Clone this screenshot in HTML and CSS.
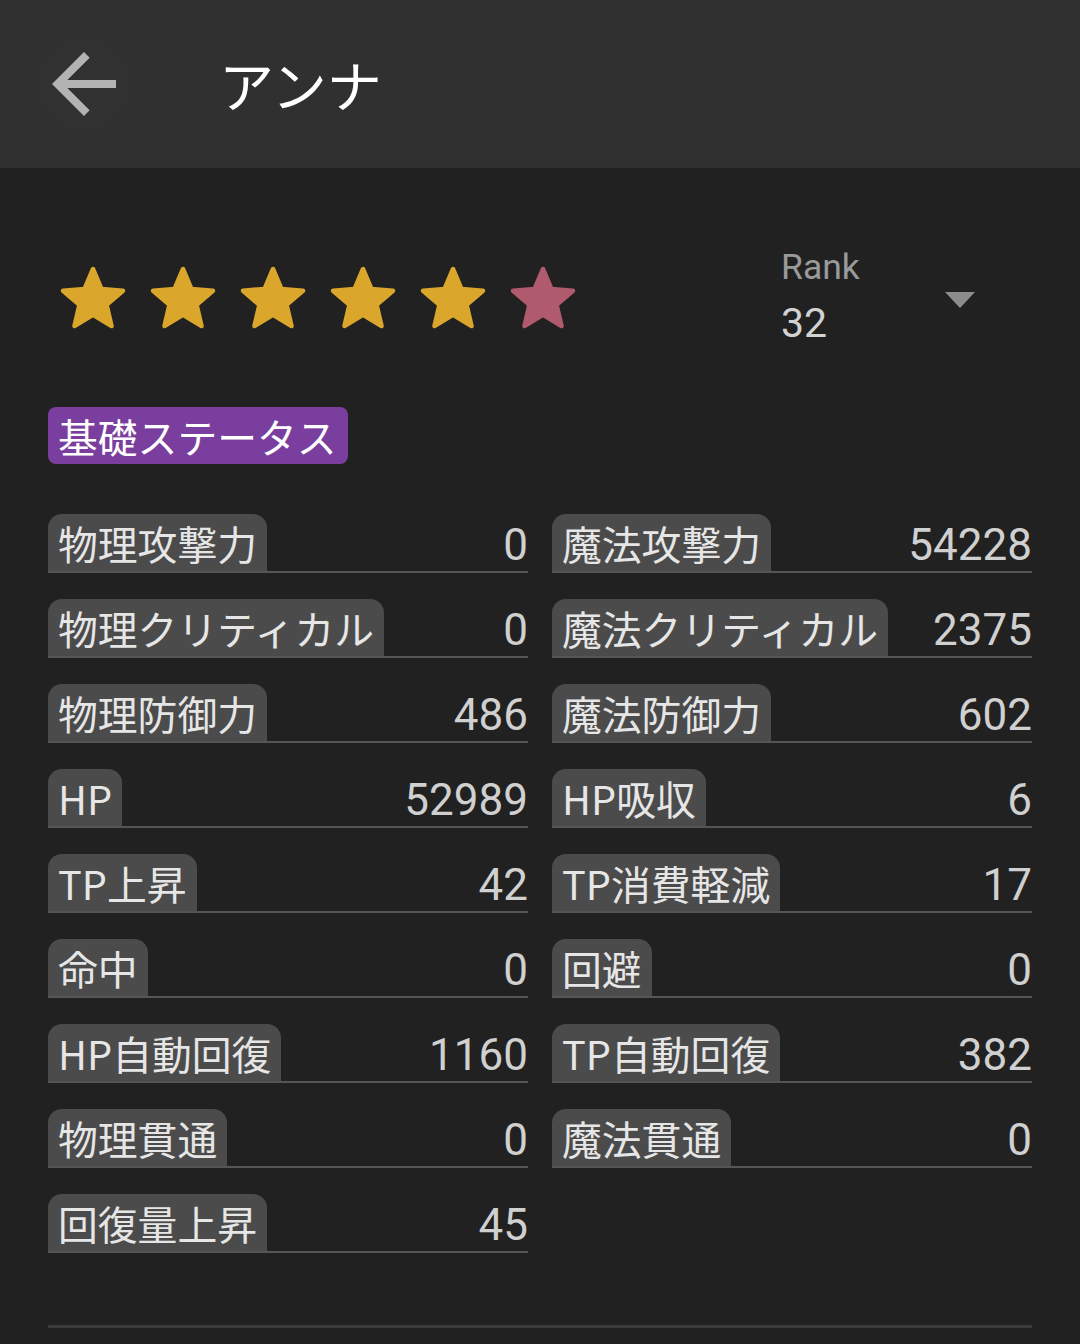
FILE: index.html
```html
<!DOCTYPE html>
<html lang="ja">
<head>
<meta charset="utf-8">
<link rel="stylesheet" href="styles.css">
</head>
<body>
<header class="appbar">
  <div class="back">
    <svg viewBox="0 0 24 24" width="96" height="96"><path fill="#b3b3b3" d="M20 11H7.83l5.59-5.59L12 4l-8 8 8 8 1.41-1.41L7.83 13H20v-2z"/></svg>
  </div>
  <h1 class="title">アンナ</h1>
</header>
<main class="content">
  <section class="toprow">
    <div class="stars">
      <svg class="star gold" viewBox="0 0 24 24"><path d="M12 17.27L18.18 21l-1.64-7.03L22 9.24l-7.19-.61L12 2 9.19 8.63 2 9.24l5.46 4.73L5.82 21z"/></svg>
      <svg class="star gold" viewBox="0 0 24 24"><path d="M12 17.27L18.18 21l-1.64-7.03L22 9.24l-7.19-.61L12 2 9.19 8.63 2 9.24l5.46 4.73L5.82 21z"/></svg>
      <svg class="star gold" viewBox="0 0 24 24"><path d="M12 17.27L18.18 21l-1.64-7.03L22 9.24l-7.19-.61L12 2 9.19 8.63 2 9.24l5.46 4.73L5.82 21z"/></svg>
      <svg class="star gold" viewBox="0 0 24 24"><path d="M12 17.27L18.18 21l-1.64-7.03L22 9.24l-7.19-.61L12 2 9.19 8.63 2 9.24l5.46 4.73L5.82 21z"/></svg>
      <svg class="star gold" viewBox="0 0 24 24"><path d="M12 17.27L18.18 21l-1.64-7.03L22 9.24l-7.19-.61L12 2 9.19 8.63 2 9.24l5.46 4.73L5.82 21z"/></svg>
      <svg class="star pink" viewBox="0 0 24 24"><path d="M12 17.27L18.18 21l-1.64-7.03L22 9.24l-7.19-.61L12 2 9.19 8.63 2 9.24l5.46 4.73L5.82 21z"/></svg>
    </div>
    <div class="rank">
      <div class="rank-text">
        <div class="rank-label">Rank</div>
        <div class="rank-value">32</div>
      </div>
      <div class="caret"></div>
    </div>
  </section>

  <div class="section-badge">基礎ステータス</div>

  <section class="stats">
    <div class="stat"><span class="chip">物理攻撃力</span><span class="val">0</span></div>
    <div class="stat"><span class="chip">魔法攻撃力</span><span class="val">54228</span></div>
    <div class="stat"><span class="chip">物理クリティカル</span><span class="val">0</span></div>
    <div class="stat"><span class="chip">魔法クリティカル</span><span class="val">2375</span></div>
    <div class="stat"><span class="chip">物理防御力</span><span class="val">486</span></div>
    <div class="stat"><span class="chip">魔法防御力</span><span class="val">602</span></div>
    <div class="stat"><span class="chip">HP</span><span class="val">52989</span></div>
    <div class="stat"><span class="chip">HP吸収</span><span class="val">6</span></div>
    <div class="stat"><span class="chip">TP上昇</span><span class="val">42</span></div>
    <div class="stat"><span class="chip">TP消費軽減</span><span class="val">17</span></div>
    <div class="stat"><span class="chip">命中</span><span class="val">0</span></div>
    <div class="stat"><span class="chip">回避</span><span class="val">0</span></div>
    <div class="stat"><span class="chip">HP自動回復</span><span class="val">1160</span></div>
    <div class="stat"><span class="chip">TP自動回復</span><span class="val">382</span></div>
    <div class="stat"><span class="chip">物理貫通</span><span class="val">0</span></div>
    <div class="stat"><span class="chip">魔法貫通</span><span class="val">0</span></div>
    <div class="stat"><span class="chip">回復量上昇</span><span class="val">45</span></div>
  </section>

  <hr class="divider">
</main>
</body>
</html>
```

FILE: styles.css
```css
* { box-sizing: border-box; }
html, body {
  margin: 0;
  padding: 0;
  background: #212121;
  height: 1344px;
  overflow: hidden;
}
body {
  font-family: Roboto, "Noto Sans CJK JP", sans-serif;
  color: #e0e0e0;
}
.appbar {
  height: 168px;
  background: #303030;
  display: flex;
  align-items: center;
  padding-left: 36px;
}
.back {
  width: 96px;
  height: 96px;
  border-radius: 50%;
  background: rgba(255,255,255,0.008);
  display: flex;
}
.title {
  margin: 0 0 0 87px;
  font-family: "Noto Sans CJK JP", sans-serif;
  font-weight: 400;
  font-size: 55px;
  color: #ffffff;
  line-height: 1;
  padding-bottom: 2px;
}
.content {
  padding: 79px 48px 0 48px;
}
.toprow {
  display: flex;
  align-items: center;
  justify-content: space-between;
}
.stars {
  display: flex;
  gap: 18px;
  margin-left: 9px;
  margin-top: 4px;
}
.star {
  width: 72px;
  height: 72px;
  display: block;
}
.star path {
  stroke-width: 1.5;
  stroke-linejoin: round;
}
.star.gold path { fill: #daa62b; stroke: #daa62b; }
.star.pink path { fill: #b05a6d; stroke: #b05a6d; }
.rank {
  width: 251px;
  display: flex;
  align-items: center;
}
.rank-text {
  flex: 1;
}
.rank-label {
  font-size: 35.5px;
  line-height: 40px;
  color: #9a9a9a;
}
.rank-value {
  margin-top: 12px;
  font-size: 41px;
  line-height: 48px;
  color: #d2d2d2;
}
.caret {
  width: 0;
  height: 0;
  border-left: 15px solid transparent;
  border-right: 15px solid transparent;
  border-top: 16px solid #8c8c8c;
  margin-right: 57px;
  margin-top: 6px;
}
.section-badge {
  margin-top: 60px;
  display: inline-block;
  height: 57px;
  line-height: 57px;
  padding: 0 11px 0 10px;
  background: #7a3e9e;
  border-radius: 8px;
  font-family: "Noto Sans CJK JP", sans-serif;
  font-size: 39.8px;
  color: #ffffff;
}
.stats {
  margin-top: 50px;
  display: grid;
  grid-template-columns: 480px 480px;
  column-gap: 24px;
  row-gap: 26px;
}
.stat {
  display: flex;
  align-items: baseline;
  justify-content: space-between;
  border-bottom: 2px solid #555555;
}
.chip {
  height: 57px;
  line-height: 57px;
  padding: 0 10px;
  background: #4b4b4b;
  border-radius: 14px 14px 0 0;
  font-family: "Noto Sans CJK JP", sans-serif;
  font-size: 39.8px;
  color: #e6e6e6;
  white-space: nowrap;
}
.val {
  font-family: Roboto, sans-serif;
  font-size: 44px;
  color: #d0d0d0;
}
.divider {
  margin: 72px 0 0 0;
  border: 0;
  height: 3px;
  background: #3b3b3b;
}
```
